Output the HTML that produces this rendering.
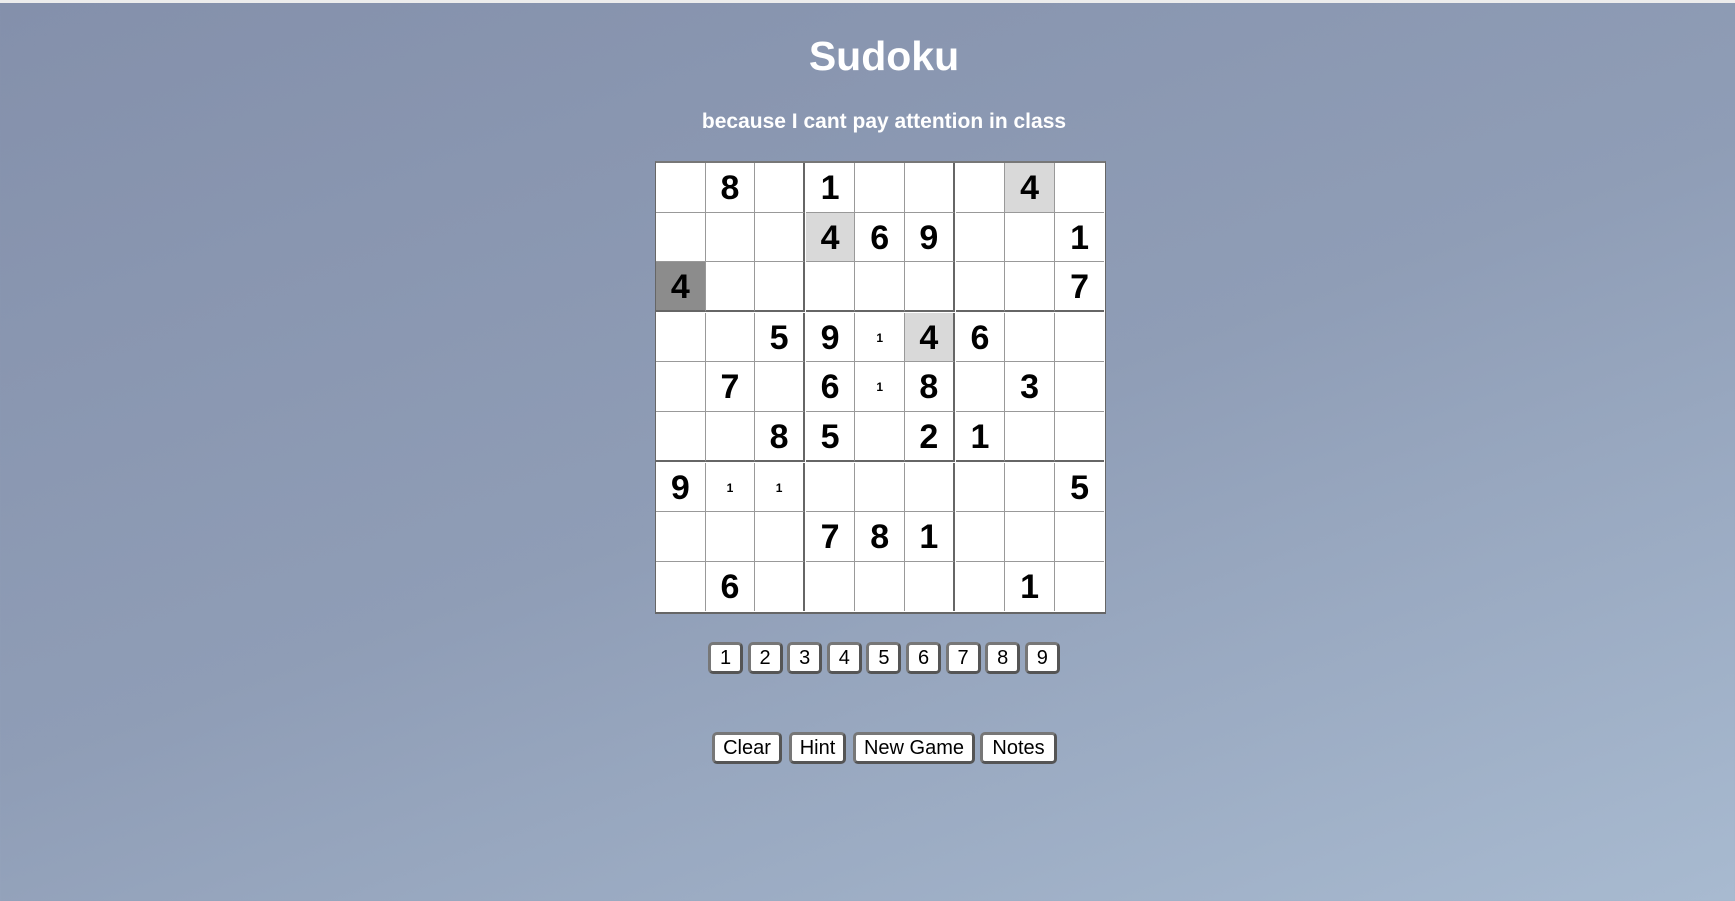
<!DOCTYPE html>
<html><head><style>
html,body{margin:0;padding:0;}
body{width:1735px;height:901px;overflow:hidden;font-family:"Liberation Sans",Arial,sans-serif;
background:linear-gradient(160deg,#8490ab 0%,#8f9db6 50%,#a8bad0 100%);position:relative;border-top:3px solid #ececec;box-sizing:border-box;}
h1{position:absolute;top:30px;left:0;width:1768px;text-align:center;margin:0;color:#fff;font-size:41px;font-weight:bold;}
h2{position:absolute;top:107px;left:0;width:1768px;text-align:center;margin:0;color:#fff;font-size:21px;font-weight:bold;}
#grid{position:absolute;left:655px;top:158px;width:449px;height:449px;background:#fff;border:1px solid #666;border-top:2px solid #777;border-bottom:2px solid #666;}
.c{position:absolute;width:49.7px;height:49.7px;box-sizing:border-box;border-right:1px solid #999;border-bottom:1px solid #999;text-align:center;line-height:50px;font-size:34px;font-weight:bold;color:#000;}
.n{font-size:12px;}
.btn{position:absolute;height:32px;box-sizing:border-box;background:#fff;border:3px solid #555;border-top-color:#777;border-left-color:#777;border-radius:5px;font-size:20px;text-align:center;line-height:26px;color:#000;}
</style></head><body>
<h1>Sudoku</h1>
<h2>because I cant pay attention in class</h2>
<div id="grid"></div>
<div id="btns"></div>
<script>
var rows=[
[0,8,0,1,0,0,0,4,0],
[0,0,0,4,6,9,0,0,1],
[4,0,0,0,0,0,0,0,7],
[0,0,5,9,'n',4,6,0,0],
[0,7,0,6,'n',8,0,3,0],
[0,0,8,5,0,2,1,0,0],
[9,'n','n',0,0,0,0,0,5],
[0,0,0,7,8,1,0,0,0],
[0,6,0,0,0,0,0,1,0]];
var hl={"0,7":"#d9d9d9","1,3":"#d9d9d9","3,5":"#d9d9d9","2,0":"#8c8c8c"};
var grid=document.getElementById('grid'),h='';
var S=49.6;
for(var r=0;r<9;r++)for(var c=0;c<9;c++){
 var v=rows[r][c];var x=c*S+(c>=3?1:0)+(c>=6?1:0);var y=r*S+(r>=3?1:0)+(r>=6?1:0);
 var st='left:'+x+'px;top:'+y+'px;';
 if(c==2||c==5)st+='border-right:2px solid #666;';
 if(r==2||r==5)st+='border-bottom:2px solid #666;';
 if(c==8)st+='border-right:none;';if(r==8)st+='border-bottom:none;';
 if(hl[r+','+c])st+='background:'+hl[r+','+c]+';';
 h+='<div class="c'+(v=='n'?' n':'')+'" style="'+st+'">'+(v=='n'?'1':(v||''))+'</div>';
}
grid.innerHTML=h;
var b='';
for(var i=0;i<9;i++)b+='<div class="btn" style="left:'+(708+i*39.6)+'px;top:639px;width:35px;">'+(i+1)+'</div>';
var bb=[['Clear',712,70],['Hint',789,57],['New Game',853,122],['Notes',980,77]];
bb.forEach(function(a){b+='<div class="btn" style="left:'+a[1]+'px;top:729px;width:'+a[2]+'px;">'+a[0]+'</div>';});
document.getElementById('btns').innerHTML=b;
</script>
</body></html>
